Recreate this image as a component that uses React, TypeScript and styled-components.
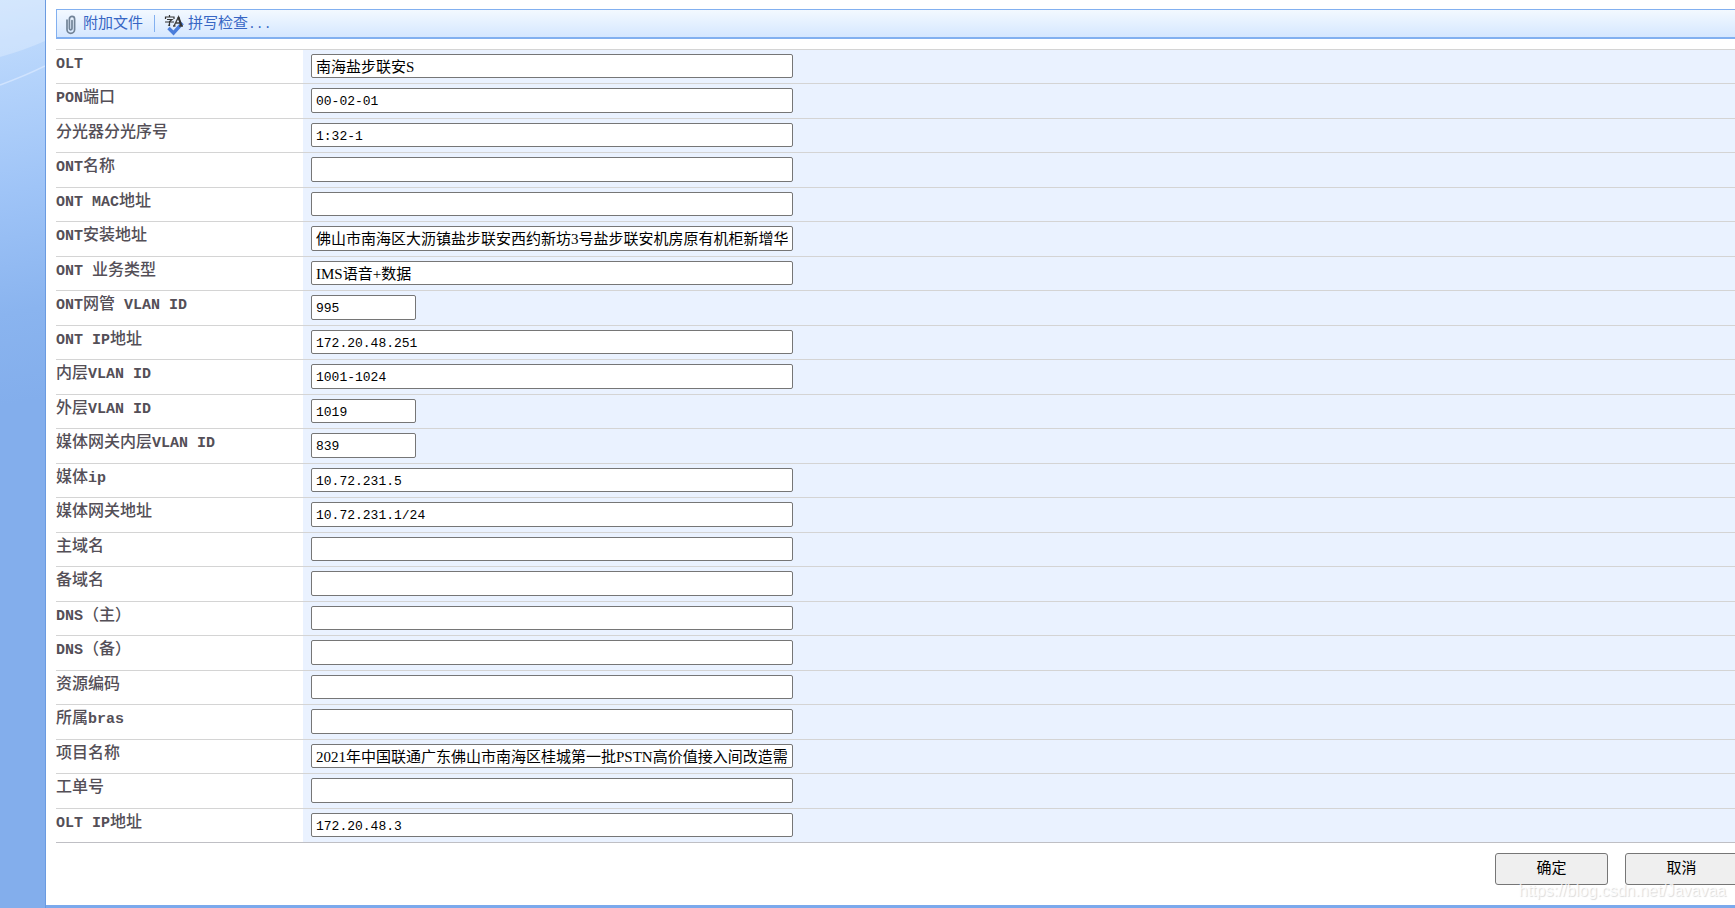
import React from "react";
import styled, { createGlobalStyle } from "styled-components";

const cjk = '"Noto Sans CJK SC"';

const GlobalStyle = createGlobalStyle`
  * { box-sizing: border-box; }
  html, body, #root { height: 100%; }
  body {
    margin: 0;
    overflow: hidden;
    background: #fff;
    font-family: "Liberation Mono", ${cjk}, monospace;
  }
`;

const Page = styled.div`
  display: flex;
  min-height: 100%;
  overflow: hidden;
`;

const Sidebar = styled.aside`
  flex: 0 0 46px;
  border-right: 1px solid #6b9be0;
  background: linear-gradient(170deg, #c6dffd 0, #b4d3fb 80px, #9fc4f7 190px, #8ab4ef 310px, #83aeec 400px);
`;

const Swoosh = styled.svg`
  display: block;
`;

const Main = styled.main`
  flex: 1;
  min-width: 0;
  display: flex;
  flex-direction: column;
  padding: 9px 0 0 10px;
  border-bottom: 3px solid #7ba9ec;
  overflow: hidden;
`;

const Toolbar = styled.div`
  display: flex;
  align-items: center;
  height: 30px;
  padding-left: 5px;
  border: 1px solid #82b0f0;
  border-width: 1px 0 2px 1px;
  background: linear-gradient(#f3f9ff, #d5e7ff);
`;

const ToolButton = styled.button`
  display: flex;
  align-items: center;
  gap: 4px;
  padding: 2px 0 0;
  border: 0;
  background: none;
  color: #3766c4;
  font: 15px/20px "Liberation Mono", ${cjk}, monospace;
`;

const Separator = styled.span`
  width: 1px;
  height: 17px;
  margin: 0 9px 0 11px;
  background: #82b0f0;
`;

const Dots = styled.span`
  font-size: 13px;
`;

const FormTable = styled.table`
  width: 100%;
  margin-top: 10px;
  border-collapse: separate;
  border-spacing: 0;
  border-bottom: 1px solid #bfbfc4;
`;

const Row = styled.tr`
  height: 34px;
  &:nth-child(even) { height: 35px; }
`;

const LabelCell = styled.th`
  width: 247px;
  padding: 4px 0 0;
  border-top: 1px solid #d4d4d4;
  text-align: left;
  vertical-align: top;
  color: #544f57;
  font-size: 16px;
  font-weight: 500;
  line-height: 20px;
  white-space: nowrap;
`;

const Latin = styled.span`
  font-size: 15px;
  font-weight: 700;
`;

const FieldCell = styled.td`
  padding: 4px 0 5px 8px;
  border-top: 1px solid #d4d4d4;
  background: #eaf2ff;
  vertical-align: top;
`;

const Field = styled.input<{ $short?: boolean; $mono?: boolean }>`
  display: block;
  width: ${(p) => (p.$short ? 105 : 482)}px;
  height: 24px;
  padding: ${(p) => (p.$mono ? "2px 4px 0" : "0 4px 2px")};
  border: 1px solid #767676;
  border-radius: 2px;
  background: #fff;
  color: #000;
  font-family: ${(p) => (p.$mono ? '"Liberation Mono"' : '"Liberation Serif"')}, ${cjk}, serif;
  font-size: ${(p) => (p.$mono ? 13 : 15)}px;
  ${Row}:nth-child(even) & { height: 25px; }
`;

const Actions = styled.div`
  display: flex;
  justify-content: flex-end;
  gap: 17px;
  margin: 10px -3px 0 0;
`;

const ActionButton = styled.button`
  width: 113px;
  height: 32px;
  padding: 0 0 4px;
  border: 1px solid #767676;
  border-radius: 3px;
  background: #efefef;
  color: #000;
  font: 15px/20px ${cjk}, sans-serif;
`;

const Watermark = styled.div`
  position: absolute;
  right: 9px;
  bottom: 7px;
  color: rgba(255, 255, 255, 0.8);
  font: 16px/20px "Liberation Sans", sans-serif;
  text-shadow: 1px 1px 1px rgba(0, 0, 0, 0.15);
  pointer-events: none;
`;

type Entry = { label: string; value?: string; short?: boolean };

const entries: Entry[] = [
  { label: "OLT", value: "南海盐步联安S" },
  { label: "PON端口", value: "00-02-01" },
  { label: "分光器分光序号", value: "1:32-1" },
  { label: "ONT名称" },
  { label: "ONT MAC地址" },
  { label: "ONT安装地址", value: "佛山市南海区大沥镇盐步联安西约新坊3号盐步联安机房原有机柜新增华" },
  { label: "ONT 业务类型", value: "IMS语音+数据" },
  { label: "ONT网管 VLAN ID", value: "995", short: true },
  { label: "ONT IP地址", value: "172.20.48.251" },
  { label: "内层VLAN ID", value: "1001-1024" },
  { label: "外层VLAN ID", value: "1019", short: true },
  { label: "媒体网关内层VLAN ID", value: "839", short: true },
  { label: "媒体ip", value: "10.72.231.5" },
  { label: "媒体网关地址", value: "10.72.231.1/24" },
  { label: "主域名" },
  { label: "备域名" },
  { label: "DNS（主）" },
  { label: "DNS（备）" },
  { label: "资源编码" },
  { label: "所属bras" },
  { label: "项目名称", value: "2021年中国联通广东佛山市南海区桂城第一批PSTN高价值接入间改造需求" },
  { label: "工单号" },
  { label: "OLT IP地址", value: "172.20.48.3" },
];

/* Latin runs are set one size below the Chinese characters around them. */
function LabelText({ text }: { text: string }) {
  return (
    <>
      {text.split(/([ -~]+)/).map((run, i) =>
        i % 2 ? <Latin key={i}>{run}</Latin> : run,
      )}
    </>
  );
}

function PaperclipIcon() {
  return (
    <svg width="17" height="20" viewBox="0 0 17 20" fill="none" aria-hidden="true">
      <path
        d="M5 5v9.500a3.800 3.800 0 0 0 7.600 0V4a2.600 2.600 0 0 0-5.200 0V13.500a1.300 1.300 0 0 0 2.600 0V5.500"
        stroke="#718397"
        strokeWidth="1.700"
        strokeLinecap="round"
      />
    </svg>
  );
}

function SpellIcon() {
  return (
    <svg width="20" height="22" viewBox="0 0 20 22" fill="none" aria-hidden="true">
      <path d="M4.500 14l5 5 9-10" stroke="#4a7ddb" strokeWidth="3.400" />
      <path d="M5.500 1v2M1.500 5V3h8.500v2M3 5.500h5L5.500 7.500v4l-1.500-.5M1 8h9" stroke="#333" strokeWidth="1.200" />
      <path d="M10 12l4.500-9 2.500 9M12 9h4M9 12h2.500M15 12h4" stroke="#444" strokeWidth="1.400" />
      <path d="M14.500 3l3 9" stroke="#333" strokeWidth="2" />
    </svg>
  );
}

export default function App() {
  return (
    <>
      <GlobalStyle />
      <Page>
        <Sidebar>
          <Swoosh width="45" height="100" viewBox="0 0 45 100" aria-hidden="true">
            <path d="M0 0H45V41Q25 50 0 57Z" fill="#fff" opacity="0.25" />
            <path d="M0 85Q25 76 45 66" fill="none" stroke="#d0e3fe" strokeWidth="1.500" />
          </Swoosh>
        </Sidebar>
        <Main>
          <Toolbar role="toolbar">
            <ToolButton type="button">
              <PaperclipIcon />
              <span>附加文件</span>
            </ToolButton>
            <Separator />
            <ToolButton type="button">
              <SpellIcon />
              <span>拼写检查<Dots>...</Dots></span>
            </ToolButton>
          </Toolbar>
          <FormTable>
            <tbody>
              {entries.map(({ label, value = "", short }, i) => (
                <Row key={label}>
                  <LabelCell scope="row">
                    <label htmlFor={`field-${i}`}><LabelText text={label} /></label>
                  </LabelCell>
                  <FieldCell>
                    <Field
                      id={`field-${i}`}
                      type="text"
                      defaultValue={value}
                      $short={short}
                      $mono={/^[ -~]*$/.test(value)}
                    />
                  </FieldCell>
                </Row>
              ))}
            </tbody>
          </FormTable>
          <Actions>
            <ActionButton type="submit">确定</ActionButton>
            <ActionButton type="button">取消</ActionButton>
          </Actions>
        </Main>
        <Watermark>https://blog.csdn.net/Javavaa</Watermark>
      </Page>
    </>
  );
}
